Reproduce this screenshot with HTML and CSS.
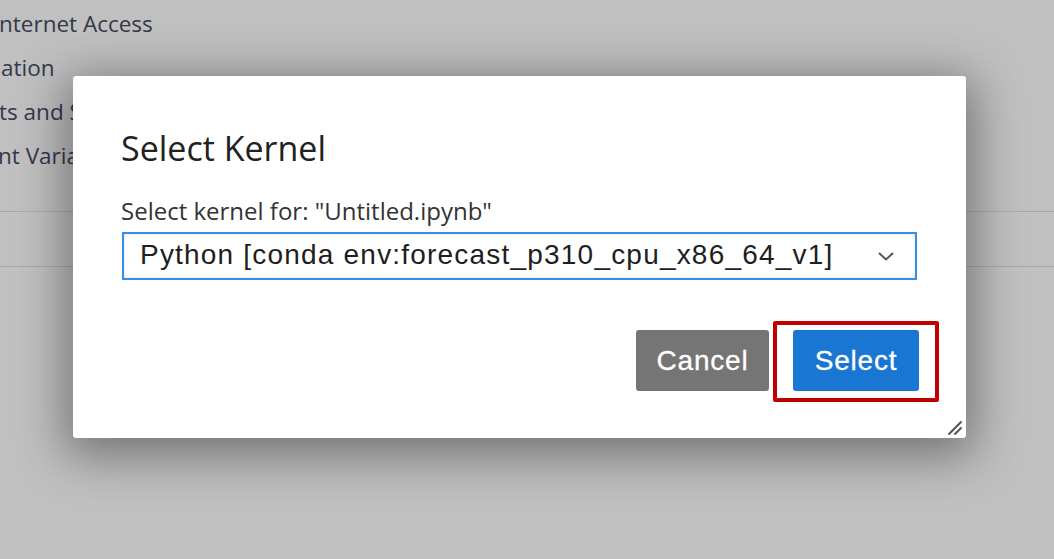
FILE: index.html
```html
<!DOCTYPE html>
<html lang="en">
<head>
<meta charset="utf-8">
<title>Select Kernel</title>
<link rel="stylesheet" href="styles.css">
</head>
<body>
<main class="page">
  <ul class="settings">
    <li class="row r1">nternet Access</li>
    <li class="row r2">ation</li>
    <li class="row r3">ts and Settings</li>
    <li class="row r4">nt Variables</li>
  </ul>
  <div class="band"></div>
</main>

<div class="overlay">
  <section class="dialog" role="dialog" aria-labelledby="dlg-title">
    <h1 id="dlg-title" class="title">Select Kernel</h1>
    <label class="field-label">Select kernel for: "Untitled.ipynb"</label>
    <div class="select">
      <span class="select-value">Python [conda env:forecast_p310_cpu_x86_64_v1]</span>
      <svg class="chevron" width="18" height="12" viewBox="0 0 18 12"><path d="M2 3 L9 9.5 L16 3" fill="none" stroke="#555" stroke-width="2"/></svg>
    </div>
    <div class="actions">
      <button class="btn btn-cancel">Cancel</button>
      <span class="highlight"><button class="btn btn-select">Select</button></span>
    </div>
    <svg class="resize" width="16" height="16" viewBox="0 0 16 16"><path d="M2 14 L14 2 M8 14 L14 8" stroke="#555" stroke-width="2" fill="none" stroke-linecap="round"/></svg>
  </section>
</div>
</body>
</html>
```

FILE: styles.css
```css
html, body {
  margin: 0;
  padding: 0;
  height: 100%;
}
body {
  background: #c0c0c0;
  font-family: "Open Sans", "Noto Sans", sans-serif;
  overflow: hidden;
}
.page {
  position: relative;
  height: 100%;
}
.settings {
  list-style: none;
  margin: 0;
  padding: 2px 0 0 0;
  color: #35384a;
  font-size: 22.5px;
}
.row {
  height: 44px;
  line-height: 44px;
  white-space: nowrap;
}
.r1 { margin-left: -1px; }
.r2 { margin-left: 1px; }
.r3 { margin-left: -1px; }
.r4 { margin-left: -2px; }
.band {
  margin-top: 33px;
  height: 54px;
  border-top: 1px solid #a9a9a9;
  border-bottom: 1px solid #a9a9a9;
}
.overlay {
  position: absolute;
  inset: 0;
  padding: 76px 0 0 73px;
}
.dialog {
  position: relative;
  box-sizing: border-box;
  width: 893px;
  height: 362px;
  background: #fff;
  border-radius: 3px;
  box-shadow: 0 10px 48px 8px rgba(0, 0, 0, 0.4);
  padding: 50px 49px 0 48px;
}
.title {
  margin: 0;
  font-weight: 400;
  font-size: 34px;
  line-height: 44px;
  color: #212121;
}
.field-label {
  display: block;
  margin-top: 26px;
  font-size: 24px;
  line-height: 30px;
  color: #333;
}
.select {
  margin-top: 6px;
  margin-left: 1px;
  height: 48px;
  box-sizing: border-box;
  border: 2px solid #3a8ee6;
  display: flex;
  align-items: center;
  padding: 0 20px 2px 16px;
  box-shadow: inset 0 0 2px rgba(58, 142, 230, 0.35);
}
.select-value {
  flex: 1;
  font-family: "Liberation Sans", Arial, sans-serif;
  font-size: 28px;
  letter-spacing: 1.2px;
  color: #1e1e1e;
  white-space: nowrap;
}
.chevron {
  display: block;
  margin-top: 2px;
}
.actions {
  display: flex;
  justify-content: flex-end;
  gap: 24px;
  margin-top: 50px;
  margin-right: -2px;
}
.btn {
  font-family: "Liberation Sans", Arial, sans-serif;
  font-size: 28px;
  letter-spacing: 0.8px;
  color: #fff;
  border: 0;
  border-radius: 3px;
  height: 61px;
  padding: 0;
  cursor: pointer;
  -webkit-text-stroke: 0.3px #fff;
}
.btn-cancel {
  width: 133px;
  background: #757575;
}
.btn-select {
  width: 126px;
  background: #1976d2;
  display: block;
}
.highlight {
  position: relative;
  display: block;
}
.highlight::after {
  content: "";
  position: absolute;
  top: -9px;
  left: -20px;
  right: -20px;
  bottom: -11px;
  border: 4px solid #c00000;
  border-radius: 2px;
  pointer-events: none;
}
.resize {
  position: absolute;
  right: 3px;
  bottom: 2px;
}
```
